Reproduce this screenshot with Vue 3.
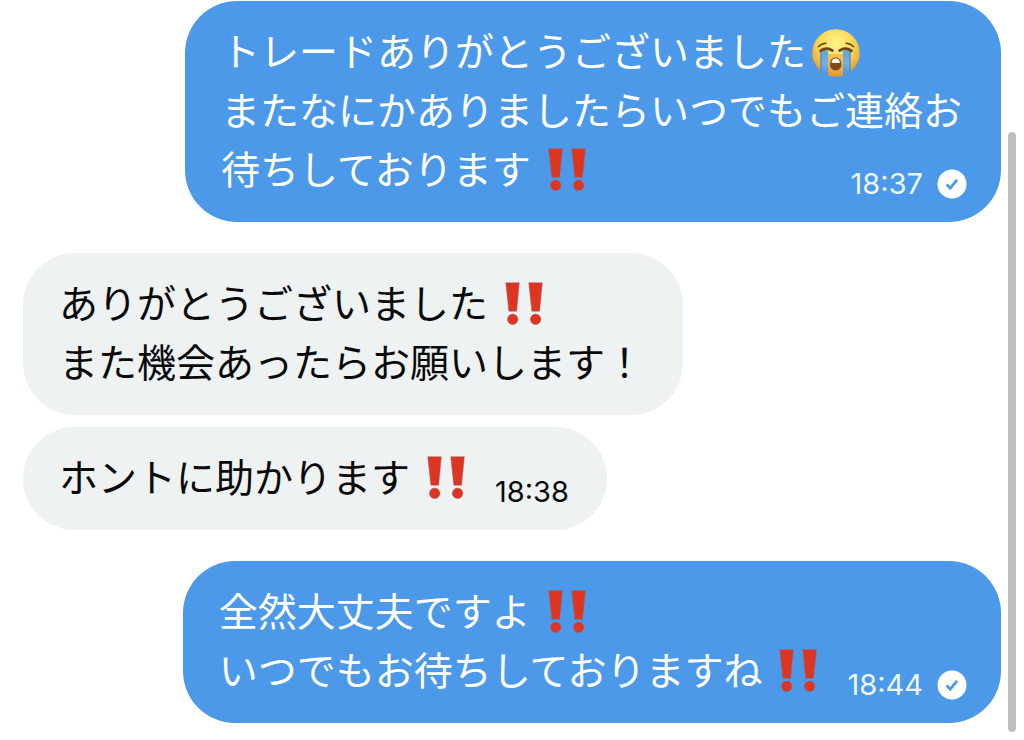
<script setup>
const messages = [
  {
    id: 1,
    mine: true,
    time: '18:37',
    lines: [
      { text: 'トレードありがとうございました', emoji: 'cry' },
      { text: 'またなにかありましたらいつでもご連絡お' },
      { text: '待ちしております', emoji: 'bang' },
    ],
  },
  {
    id: 2,
    mine: false,
    lines: [
      { text: 'ありがとうございました', emoji: 'bang' },
      { text: 'また機会あったらお願いします！' },
    ],
  },
  {
    id: 3,
    mine: false,
    grouped: true,
    time: '18:38',
    lines: [{ text: 'ホントに助かります', emoji: 'bang' }],
  },
  {
    id: 4,
    mine: true,
    time: '18:44',
    lines: [
      { text: '全然大丈夫ですよ', emoji: 'bang' },
      { text: 'いつでもお待ちしておりますね', emoji: 'bang' },
    ],
  },
]
</script>

<template>
  <main class="chat">
    <article
      v-for="m in messages"
      :key="m.id"
      class="bubble"
      :class="{ mine: m.mine, grouped: m.grouped }"
    >
      <div v-for="(line, i) in m.lines" :key="i" class="row">
        <p class="line">
          <span>{{ line.text }}</span>
          <svg v-if="line.emoji === 'bang'" class="emoji bang" viewBox="0 0 48 48" role="img" aria-label="‼️">
            <g fill="#dd3522" stroke="#a8584f" stroke-width=".5">
              <path d="M5.8 1.8H19.3L16.6 30.2H8.9Z" />
              <path d="M28.8 1.8H42.3L39.5 30.2H31.8Z" />
              <circle cx="12.7" cy="38.3" r="5.2" />
              <circle cx="35.6" cy="38.3" r="5.2" />
            </g>
          </svg>
          <svg v-if="line.emoji === 'cry'" class="emoji" viewBox="0 0 48 48" role="img" aria-label="😭">
            <defs>
              <radialGradient id="face" cx=".5" cy=".32" r=".68">
                <stop offset="0" stop-color="#fff48c" />
                <stop offset=".5" stop-color="#fbdc58" />
                <stop offset=".8" stop-color="#efb03c" />
                <stop offset="1" stop-color="#d5862b" />
              </radialGradient>
              <linearGradient id="tear" x1="0" y1="0" x2="0" y2="1">
                <stop offset="0" stop-color="#5fa3de" />
                <stop offset=".5" stop-color="#74b2e8" />
                <stop offset="1" stop-color="#3f8ad8" />
              </linearGradient>
              <clipPath id="disc"><circle cx="24" cy="24" r="23.8" /></clipPath>
            </defs>
            <circle cx="24" cy="24" r="23.8" fill="url(#face)" />
            <g clip-path="url(#disc)">
              <path d="M16 25H31V48H16Z" fill="#e9a53a" opacity=".55" />
              <path d="M8.5 22Q12 20 16 22V48H8.5Z" fill="url(#tear)" />
              <path d="M31 22Q35 20 38.5 22V48H31Z" fill="url(#tear)" />
              <path d="M9 22V46M38 22V46" stroke="#3f80c6" stroke-width="1" />
            </g>
            <g fill="none" stroke="#6b4512" stroke-linecap="round">
              <path d="M8.5 21.8Q14.5 17.5 20.5 21.6M27.5 21.6Q33.5 17.5 39.5 21.8" stroke-width="2.6" />
              <path d="M6.3 17.7Q9.5 14.5 14 14.2M34 14.2Q38.5 14.5 41.7 17.7" stroke-width="1.5" />
            </g>
            <path d="M23.7 28.5C27.6 28.5 29.3 31.6 29.3 35.2C29.3 39.3 27.2 41.3 23.7 41.3C20.2 41.3 18.1 39.3 18.1 35.2C18.1 31.6 19.8 28.5 23.7 28.5Z" fill="#80481c" />
            <path d="M23.7 29.4C26.2 29.4 27.7 31 27.9 33.2Q27.9 34 27 34H20.4Q19.5 34 19.5 33.2C19.7 31 21.2 29.4 23.7 29.4Z" fill="#fffdf5" />
          </svg>
        </p>
        <div v-if="m.time && i === m.lines.length - 1" class="meta">
          <time>{{ m.time }}</time>
          <svg v-if="m.mine" class="check" viewBox="0 0 30 30" role="img" aria-label="既読">
            <circle cx="15" cy="15" r="14.5" fill="#fff" />
            <path d="M9.6 15.6L13.2 19.2L20 10.8" fill="none" stroke="#4b99e8" stroke-width="2.8" />
          </svg>
        </div>
      </div>
    </article>
    <div class="scrollbar" aria-hidden="true"></div>
  </main>
</template>

<style>
body {
  margin: 0;
  background: #fff;
}
</style>

<style scoped>
.chat {
  position: relative;
  box-sizing: border-box;
  min-height: 100vh;
  padding: 1px 23px 16px;
  display: flex;
  flex-direction: column;
  align-items: flex-start;
  font-family: "Liberation Sans", "Noto Sans CJK JP", sans-serif;
  font-size: 39px;
  line-height: 59px;
  color: #0a0a0a;
}
.bubble {
  box-sizing: border-box;
  padding: 22px 34px 22px 36px;
  border-radius: 52px;
  background: #eef2f3;
}
.bubble + .bubble {
  margin-top: 31px;
}
.bubble + .grouped {
  margin-top: 12px;
}
.mine {
  align-self: flex-end;
  background: #4b99e8;
  color: #fff;
}
.row {
  display: flex;
  justify-content: space-between;
}
.line {
  display: flex;
  align-items: center;
  height: 59px;
  margin: 0;
  padding-right: 5px;
  white-space: nowrap;
}
.emoji {
  flex: none;
  width: 48px;
  height: 48px;
  margin-left: 6px;
}
.bang {
  margin-left: 12px;
}
.meta {
  display: flex;
  align-items: center;
  align-self: flex-end;
  gap: 14px;
  height: 32px;
  margin-left: 20px;
  padding-right: 4px;
  font-family: Inter, "Liberation Sans", sans-serif;
  font-size: 29px;
  line-height: 32px;
}
.mine .meta {
  padding-right: 0;
  color: #eef7ff;
}
.check {
  width: 30px;
  height: 30px;
}
.scrollbar {
  position: absolute;
  top: 132px;
  right: 8px;
  bottom: 8px;
  width: 8px;
  border-radius: 4px;
  background: #bfbfbf;
}
</style>
